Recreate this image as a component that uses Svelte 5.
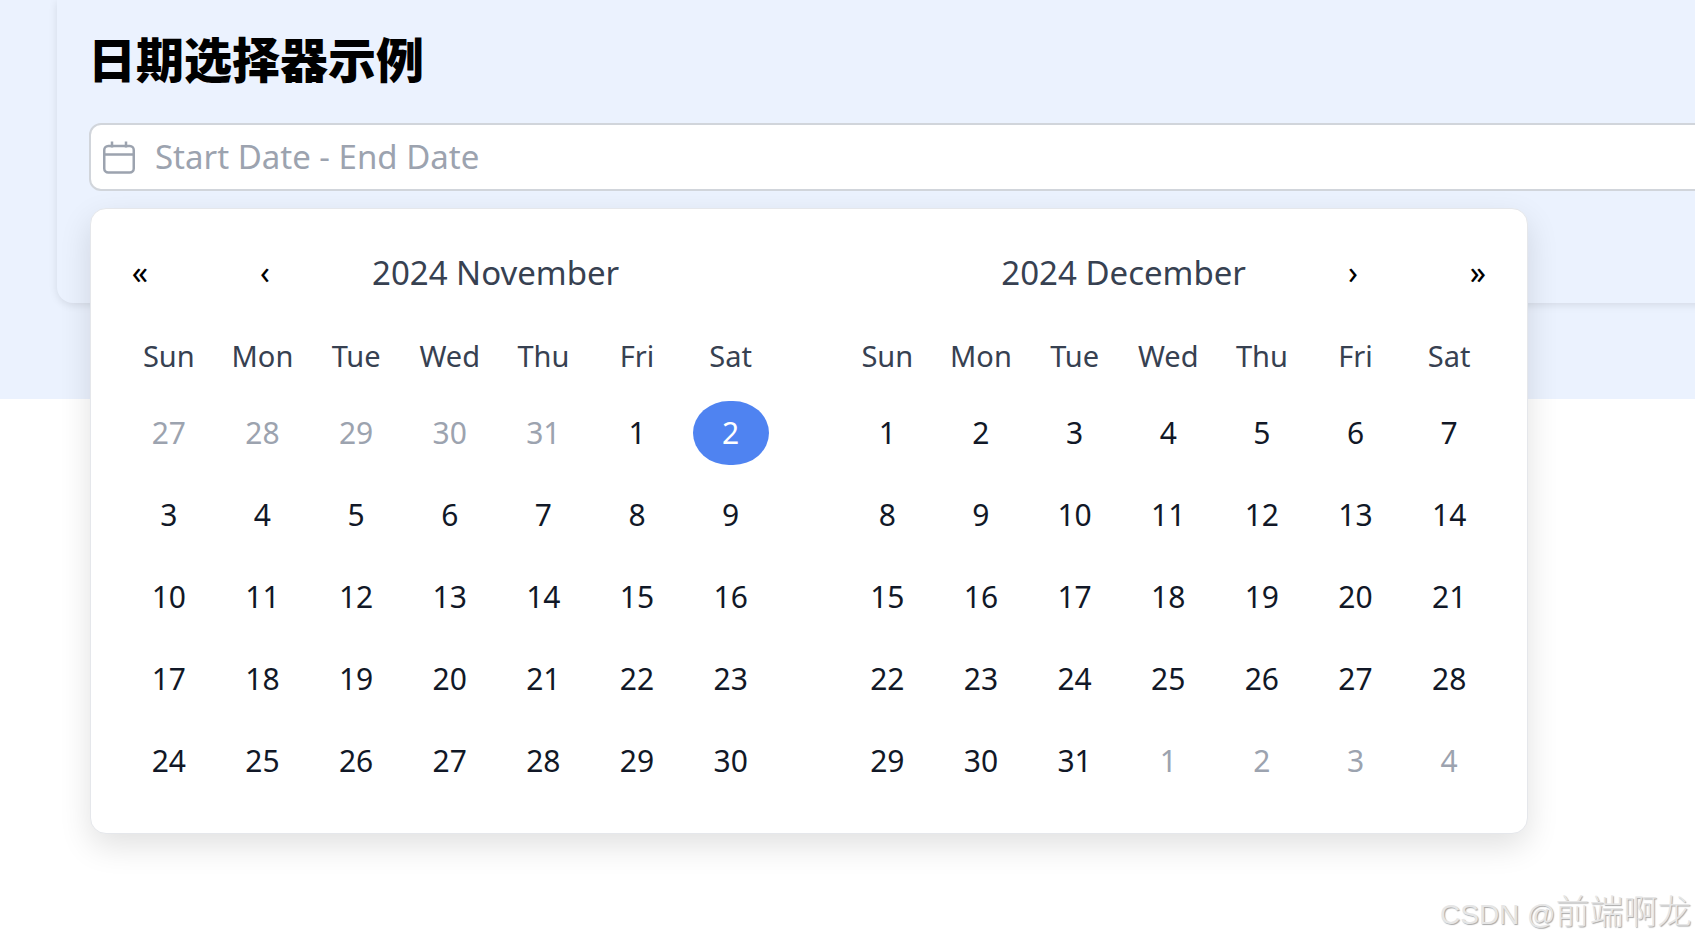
<script>
    const weekdays = ["Sun", "Mon", "Tue", "Wed", "Thu", "Fri", "Sat"];

    // [day, belongs to shown month]
    const range = (from, to, inMonth = true) => {
        const days = [];
        for (let d = from; d <= to; d++) days.push({ d, inMonth });
        return days;
    };

    const november = [...range(27, 31, false), ...range(1, 30)];
    const december = [...range(1, 31), ...range(1, 4, false)];
    const selected = 6; // index of Nov 2
</script>

<div class="page">
    <div class="card">
        <h1>日期选择器示例</h1>
        <div class="picker">
            <div class="field">
                <svg class="cal" width="32" height="33" viewBox="0 0 32 33" fill="none" stroke="#9ca3af" stroke-width="2.5">
                    <rect x="1.25" y="5" width="29.5" height="26.5" rx="4" />
                    <path d="M1.25 13.5h29.5M9 0.5v6M23 0.5v6" />
                </svg>
                <input type="text" placeholder="Start Date - End Date" />
            </div>
            <div class="popover">
                <div class="month">
                    <div class="head">
                        <button>«</button>
                        <button>‹</button>
                        <span class="title">2024 November</span>
                    </div>
                    <div class="grid weeks">
                        {#each weekdays as w}<span>{w}</span>{/each}
                    </div>
                    <div class="grid days">
                        {#each november as day, i}
                            <span class:out={!day.inMonth} class:sel={i === selected}>{day.d}</span>
                        {/each}
                    </div>
                </div>
                <div class="month">
                    <div class="head right">
                        <span class="title">2024 December</span>
                        <button>›</button>
                        <button>»</button>
                    </div>
                    <div class="grid weeks">
                        {#each weekdays as w}<span>{w}</span>{/each}
                    </div>
                    <div class="grid days">
                        {#each december as day}
                            <span class:out={!day.inMonth}>{day.d}</span>
                        {/each}
                    </div>
                </div>
            </div>
        </div>
    </div>
    <div class="mark">CSDN @<span>前端啊龙</span></div>
</div>

<style>
    :global(body) {
        margin: 0;
        background: #fff;
    }

    .page {
        position: relative;
        width: 1695px;
        height: 944px;
        overflow: hidden;
        font-family: "Noto Sans", "Noto Sans CJK SC", sans-serif;
    }

    .page::before {
        content: "";
        display: block;
        position: absolute;
        left: 0;
        right: 0;
        top: 0;
        height: 399px;
        background: #ebf2fe;
    }

    .card {
        position: relative;
        box-sizing: border-box;
        width: 1800px;
        margin-left: 57px;
        padding: 27px 0 112px 32px;
        background: #ebf2fe;
        border-radius: 0 0 16px 16px;
        box-shadow: 0 2px 8px rgba(0, 0, 0, 0.1);
    }

    h1 {
        margin: 0 0 36px -1px;
        font-family: "Noto Sans CJK SC", sans-serif;
        font-size: 48px;
        line-height: 60px;
        font-weight: 900;
        color: #000;
    }

    .picker {
        position: relative;
    }

    .field {
        display: flex;
        align-items: center;
        box-sizing: border-box;
        height: 68px;
        padding-left: 12px;
        gap: 20px;
        background: #fff;
        border: 2px solid #d1d5db;
        border-radius: 12px;
    }

    .cal {
        flex: none;
    }

    input {
        flex: 1;
        border: 0;
        outline: 0;
        padding: 0 0 2px;
        background: none;
        font: inherit;
        font-size: 33px;
        color: #374151;
    }

    input::placeholder {
        color: #9ca3af;
        opacity: 1;
    }

    .popover {
        position: absolute;
        top: 85px;
        left: 1px;
        box-sizing: border-box;
        width: 1438px;
        padding: 31px 31px 40px;
        display: flex;
        gap: 63px;
        background: #fff;
        border: 1px solid #e5e7eb;
        border-radius: 16px;
        box-shadow: 0 12px 32px rgba(0, 0, 0, 0.12);
    }

    .month {
        width: 656px;
    }

    .head {
        display: flex;
        align-items: center;
        gap: 89px;
        height: 64px;
        margin-bottom: 32px;
    }

    .head.right {
        justify-content: flex-end;
    }

    .head button {
        width: 36px;
        height: 40px;
        padding: 0;
        border: 0;
        background: none;
        font-family: inherit;
        font-size: 32px;
        line-height: 40px;
        color: #000;
    }

    .title {
        font-size: 33px;
        color: #374151;
    }

    .grid {
        display: grid;
        grid-template-columns: repeat(7, 1fr);
        text-align: center;
    }

    .weeks {
        height: 40px;
        margin-bottom: 25px;
        font-size: 29px;
        line-height: 40px;
        color: #374151;
    }

    .days {
        row-gap: 18px;
        font-size: 30px;
        line-height: 63px;
        color: #111827;
        justify-items: center;
    }

    .days span {
        width: 76px;
        height: 64px;
    }

    .out {
        color: #9ca3af;
    }

    .sel {
        background: #4f83f1;
        color: #fff;
        border-radius: 36px / 32px;
    }

    .mark {
        position: absolute;
        left: 1440px;
        top: 893px;
        font-family: "Liberation Sans", "Noto Sans CJK SC", sans-serif;
        font-size: 28px;
        line-height: 38px;
        white-space: nowrap;
        color: #e6e6e6;
        text-shadow: 1px 1px 1px #a8a8a8;
    }

    .mark span {
        font-size: 34px;
        font-weight: 300;
    }
</style>
